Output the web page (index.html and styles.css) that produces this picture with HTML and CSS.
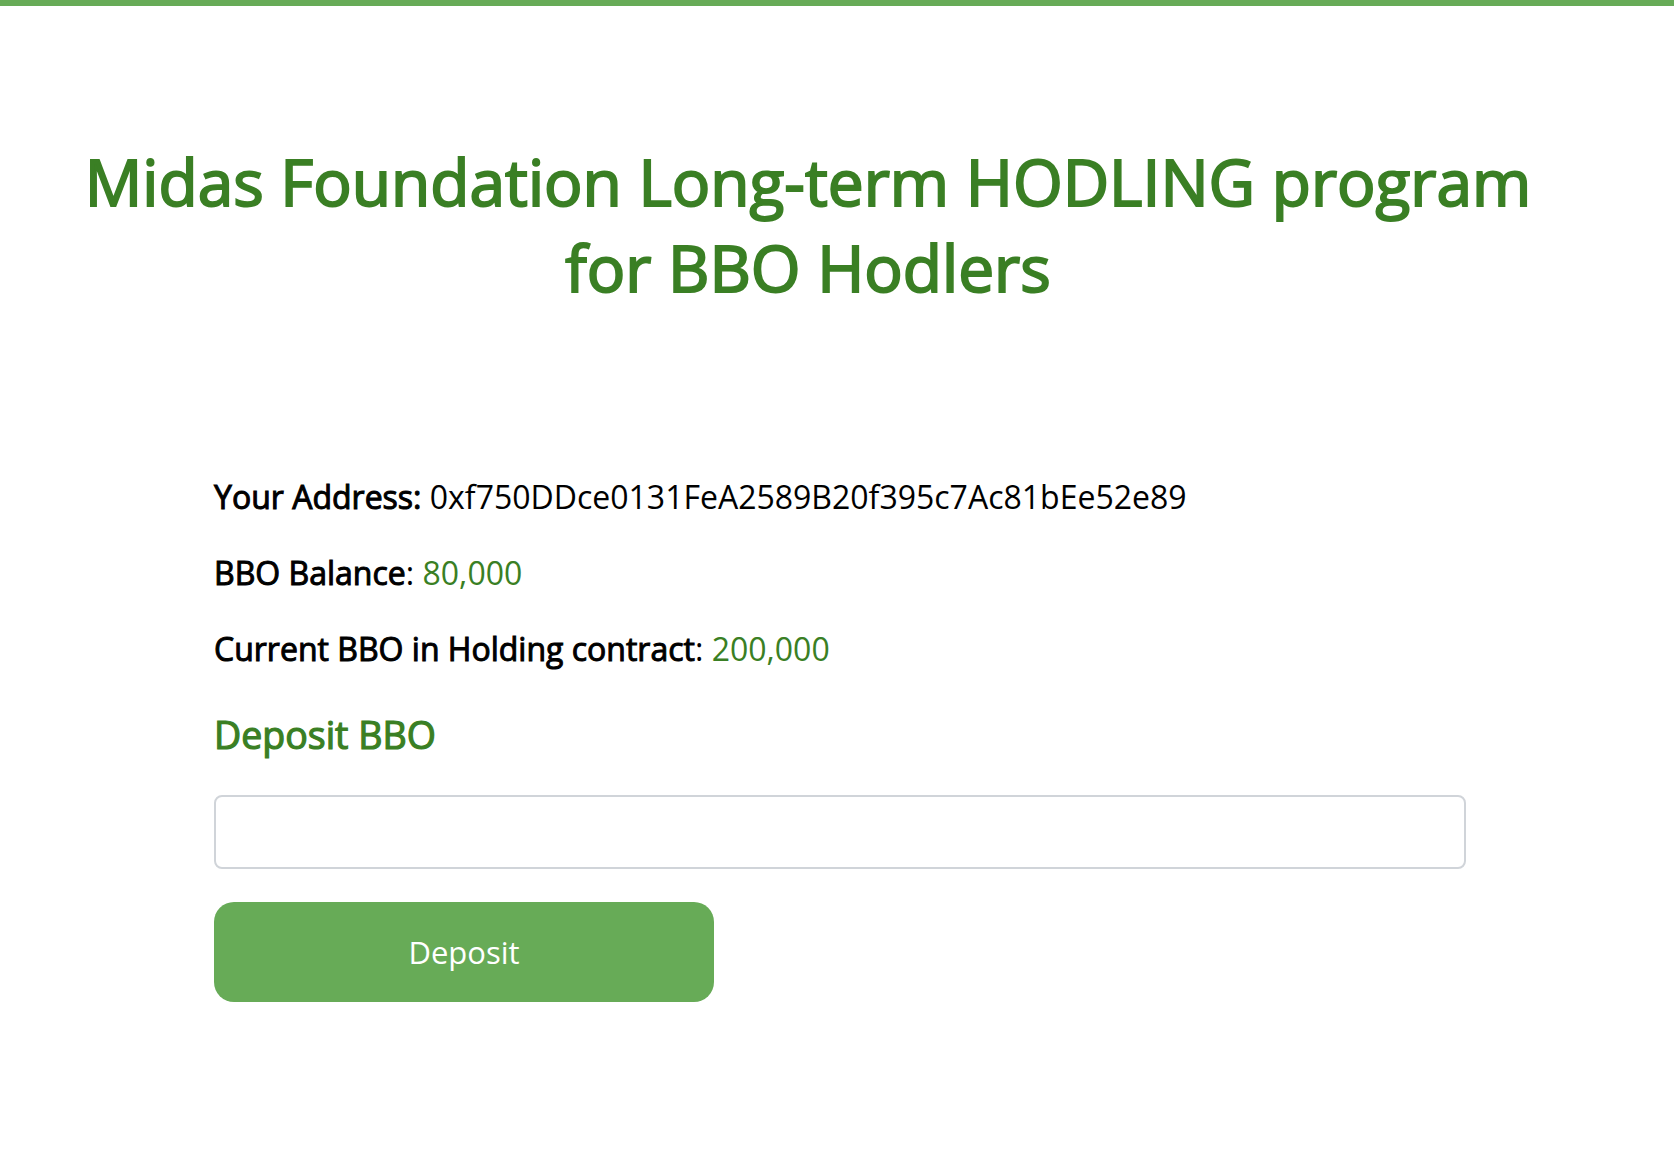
FILE: index.html
```html
<!DOCTYPE html>
<html lang="en">
<head>
<meta charset="utf-8">
<title>Midas Foundation Long-term HODLING program</title>
<link rel="stylesheet" href="styles.css">
</head>
<body>
<div class="topbar"></div>
<header class="hero">
  <h1 class="title">Midas Foundation Long-term HODLING program for BBO Hodlers</h1>
</header>
<main class="content">
  <p class="row"><b class="label">Your Address:</b> 0xf750DDce0131FeA2589B20f395c7Ac81bEe52e89</p>
  <p class="row"><b class="label">BBO Balance</b>: <span class="value">80,000</span></p>
  <p class="row"><b class="label">Current BBO in Holding contract</b>: <span class="value">200,000</span></p>
  <h2 class="subtitle">Deposit BBO</h2>
  <input class="amount" type="text" aria-label="Deposit amount">
  <button class="btn" type="button">Deposit</button>
</main>
</body>
</html>
```
FILE: styles.css
```css
html, body {
  margin: 0;
  padding: 0;
  background: #ffffff;
}
body {
  font-family: "Open Sans", "Noto Sans", sans-serif;
  color: #000000;
}
.topbar {
  height: 6px;
  background: #67ab57;
}
.hero {
  padding: 133px 136px 0 78px;
}
.title {
  margin: 0;
  text-align: center;
  font-size: 64px;
  line-height: 86px;
  font-weight: 400;
  color: #3a7f24;
  -webkit-text-stroke: 2px #3a7f24;
}
.content {
  padding: 162px 208px 0 214px;
  display: flex;
  flex-direction: column;
  align-items: flex-start;
}
.row {
  margin: 0 0 28px;
  font-size: 32px;
  line-height: 48px;
  font-weight: 400;
}
.label {
  font-weight: 400;
  -webkit-text-stroke: 1px #000000;
}
.value {
  color: #3a7f24;
}
.subtitle {
  margin: 10px 0 0;
  font-size: 37.5px;
  line-height: 48px;
  font-weight: 400;
  color: #3a7f24;
  -webkit-text-stroke: 1.2px #3a7f24;
}
.amount {
  box-sizing: border-box;
  align-self: stretch;
  margin-top: 36px;
  height: 74px;
  border: 2px solid #d0d4d9;
  border-radius: 8px;
  padding: 0 20px;
  font-family: inherit;
  font-size: 28px;
  outline: none;
}
.btn {
  margin-top: 33px;
  width: 500px;
  height: 100px;
  border: none;
  border-radius: 20px;
  background: #67ab57;
  color: #ffffff;
  font-family: inherit;
  font-size: 31px;
  font-weight: 400;
  cursor: pointer;
}
```
